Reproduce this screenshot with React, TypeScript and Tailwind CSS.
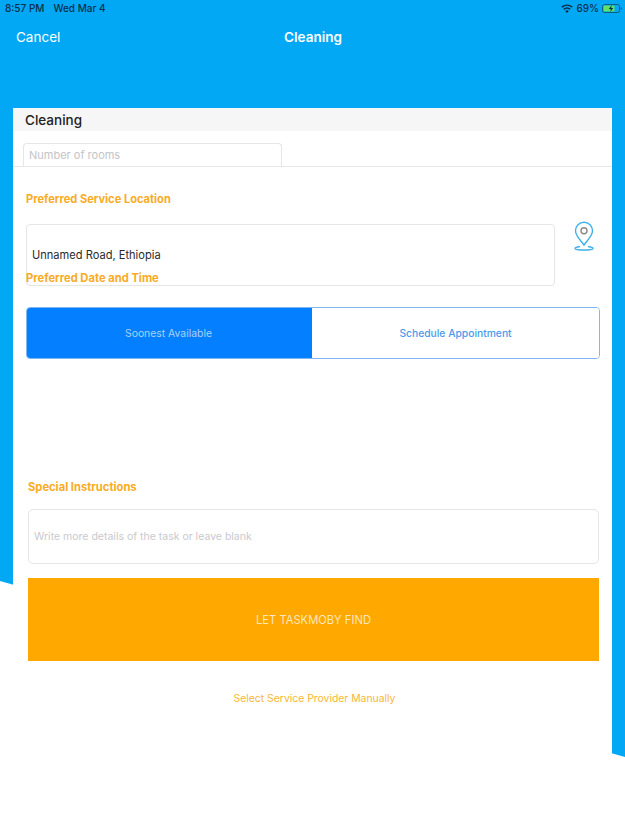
export default function App() {
  return (
    <div className="relative h-[834px] w-[625px] overflow-hidden bg-white font-['Inter','Liberation_Sans',sans-serif]">
      {/* Diagonal blue backdrop */}
      <div className="absolute inset-0 bg-[#02a8f4] [clip-path:polygon(0_0,100%_0,100%_757px,0_581px)]" />

      <div className="relative flex h-full flex-col">
        {/* Status bar */}
        <div className="flex h-[16px] items-center justify-between pl-[5px] pr-[3px] pt-[1px] text-[10px] font-medium text-[#0c2f4a]">
          <div className="flex gap-[9px]">
            <span>8:57 PM</span>
            <span>Wed Mar 4</span>
          </div>
          <div className="flex items-center gap-[3px]">
            <svg width="12" height="9" viewBox="0 0 12 9" fill="#0c2f4a">
              <path d="M6 9 4.2 6.9a2.8 2.8 0 0 1 3.6 0L6 9Z" />
              <path d="M3.3 5.9 2.3 4.7a5.8 5.8 0 0 1 7.4 0L8.7 5.9a4.2 4.2 0 0 0-5.4 0Z" />
              <path d="M1.4 3.7.3 2.5a8.8 8.8 0 0 1 11.4 0L10.6 3.7a7.2 7.2 0 0 0-9.2 0Z" />
            </svg>
            <span>69%</span>
            <svg width="20" height="9" viewBox="0 0 20 9" fill="none">
              <rect x="0.5" y="0.5" width="17" height="8" rx="2" stroke="#0c5c85" />
              <rect x="1.5" y="1.5" width="11" height="6" rx="1" fill="#5fe06a" />
              <path d="M18.8 3v3c.6-.2 1-.8 1-1.5s-.4-1.3-1-1.5Z" fill="#0c5c85" />
              <path d="M9.8 1 6.8 5h2l-.6 3 3-4h-2l.6-3Z" fill="#0c2f4a" />
            </svg>
          </div>
        </div>

        {/* Nav bar */}
        <div className="relative mt-[12px] flex h-[18px] items-center justify-center pl-[1px] text-white">
          <span className="absolute left-[16px] text-[13.5px]">Cancel</span>
          <span className="text-[13.5px] font-semibold">Cleaning</span>
        </div>

        {/* Card */}
        <div className="mx-[13px] mt-[62px] flex flex-1 flex-col bg-white">
          <div className="flex h-[23px] items-center bg-[#f6f6f6] pl-[12px] pt-[1px] text-[13.5px] font-medium text-[#222222]">
            Cleaning
          </div>

          <div className="mt-[12px] border-b border-[#e8e8e8] pl-[10px]">
            <div className="flex h-[23px] w-[259px] items-center rounded-t-[4px] border border-b-0 border-[#e6e6e6] pl-[5px] text-[11px] text-[#c4c4c8]">
              Number of rooms
            </div>
          </div>

          <div className="mt-[25px] pl-[13px] text-[11.1px] leading-[14px] font-bold text-[#f9ab25]">
            Preferred Service Location
          </div>

          <div className="mt-[18px] flex items-start pl-[13px]">
            <div className="relative h-[62px] w-[529px] rounded-[4px] border border-[#e6e6e6] pl-[5px] pt-[23px] text-[11.1px] leading-[15px] text-[#2a2a2a]">
              Unnamed Road, Ethiopia
              <span className="absolute -left-px top-[46px] text-[11.2px] leading-[14px] font-bold text-[#f9ab25]">
                Preferred Date and Time
              </span>
            </div>
            <svg className="ml-[19px] mt-[-3px]" width="20" height="30" viewBox="0 0 20 30" fill="none">
              <path
                d="M10 24C6 18.5 1.5 14.8 1.5 9.8a8.5 8.5 0 0 1 17 0C18.500 14.800 14 18.500 10 24Z"
                stroke="#3fb0ea"
                strokeWidth="1.4"
              />
              <circle cx="10" cy="9.800" r="3" stroke="#8a8a8a" strokeWidth="1.4" />
              <path d="M6 25.500C2.500 26 .8 26.500 1 27.500c.3 1 4 1.500 9 1.500s8.700-.5 9-1.500c.2-1-1.500-1.500-5-2" stroke="#3fb0ea" strokeWidth="1.400" />
            </svg>
          </div>

          {/* Segmented control */}
          <div className="mt-[21px] ml-[13px] flex h-[52px] w-[574px] overflow-hidden rounded-[4px] border border-[#7db8f5]">
            <div className="flex w-[285px] items-center justify-center bg-[#047fff] pr-[2px] pt-[1px] text-[10.4px] text-[#a9d2fb]">
              Soonest Available
            </div>
            <div className="flex flex-1 items-center justify-center bg-white pt-[1px] text-[10.3px] font-medium text-[#4a9bec]">
              Schedule Appointment
            </div>
          </div>

          <div className="mt-[121px] pl-[15px] text-[11.2px] leading-[14px] font-bold text-[#f9ab25]">
            Special Instructions
          </div>

          <div className="mt-[15px] ml-[15px] flex h-[55px] w-[571px] items-center rounded-[5px] border border-[#e6e6e6] pl-[5px] text-[10.5px] text-[#c9c9ce]">
            Write more details of the task or leave blank
          </div>

          <div className="mt-[14px] ml-[15px] flex h-[83px] w-[571px] items-center justify-center bg-[#ffa800] pt-[2px] text-[11.2px] text-[#fde6bd]">
            LET TASKMOBY FIND
          </div>

          <div className="mt-[31px] ml-[16px] w-[571px] text-center text-[10.4px] leading-[14px] text-[#f7b733]">
            Select Service Provider Manually
          </div>
        </div>
      </div>
    </div>
  )
}
